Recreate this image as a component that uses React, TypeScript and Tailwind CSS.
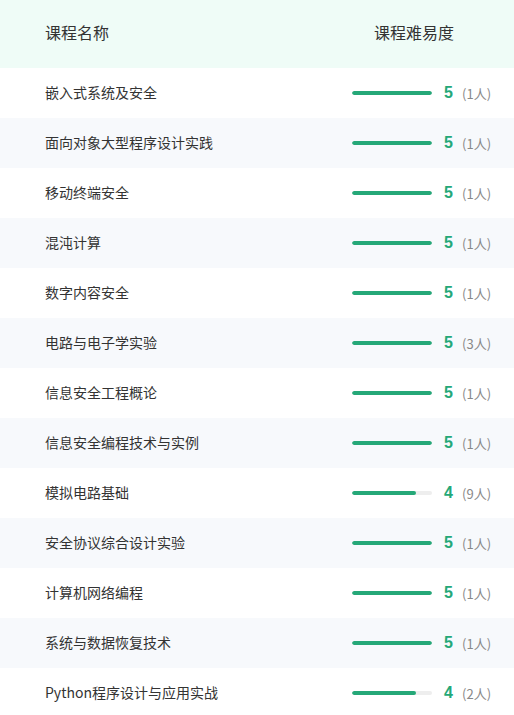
const COURSES = [
  { name: '嵌入式系统及安全', score: 5, count: 1 },
  { name: '面向对象大型程序设计实践', score: 5, count: 1 },
  { name: '移动终端安全', score: 5, count: 1 },
  { name: '混沌计算', score: 5, count: 1 },
  { name: '数字内容安全', score: 5, count: 1 },
  { name: '电路与电子学实验', score: 5, count: 3 },
  { name: '信息安全工程概论', score: 5, count: 1 },
  { name: '信息安全编程技术与实例', score: 5, count: 1 },
  { name: '模拟电路基础', score: 4, count: 9 },
  { name: '安全协议综合设计实验', score: 5, count: 1 },
  { name: '计算机网络编程', score: 5, count: 1 },
  { name: '系统与数据恢复技术', score: 5, count: 1 },
  { name: 'Python程序设计与应用实战', score: 4, count: 2 },
]

export default function App() {
  return (
    <div className="w-[514px] bg-white text-[#333] font-['Noto_Sans_CJK_SC','Microsoft_YaHei',sans-serif]">
      {/* Header */}
      <div className="flex items-center h-[68px] bg-[#effcf7] pl-[45px]">
        <div className="flex-1 text-[16px] pb-1">课程名称</div>
        <div className="w-[162px] pl-[22px] text-[16px] pb-1">课程难易度</div>
      </div>

      {/* Rows */}
      {COURSES.map((c, i) => (
        <div key={c.name}
          className={`flex items-center h-[50px] pl-[45px] ${i % 2 === 1 ? 'bg-[#f7f9fc]' : 'bg-white'}`}>
          <div className="flex-1 text-[14px] leading-none pb-[2px]">{c.name}</div>
          <div className="w-[162px] flex items-center">
            <div className="w-[80px] h-[4px] rounded-full bg-[#eeeeee] overflow-hidden">
              <div className="h-full rounded-full bg-[#25a878]"
                style={{ width: `${(c.score / 5) * 100}%` }} />
            </div>
            <span className="ml-[12px] w-[10px] text-[16px] font-bold text-[#25a878] font-['Liberation_Sans',sans-serif] leading-none">
              {c.score}
            </span>
            <span className="ml-[8px] text-[13px] text-[#888] leading-none">({c.count}人)</span>
          </div>
        </div>
      ))}
    </div>
  )
}
